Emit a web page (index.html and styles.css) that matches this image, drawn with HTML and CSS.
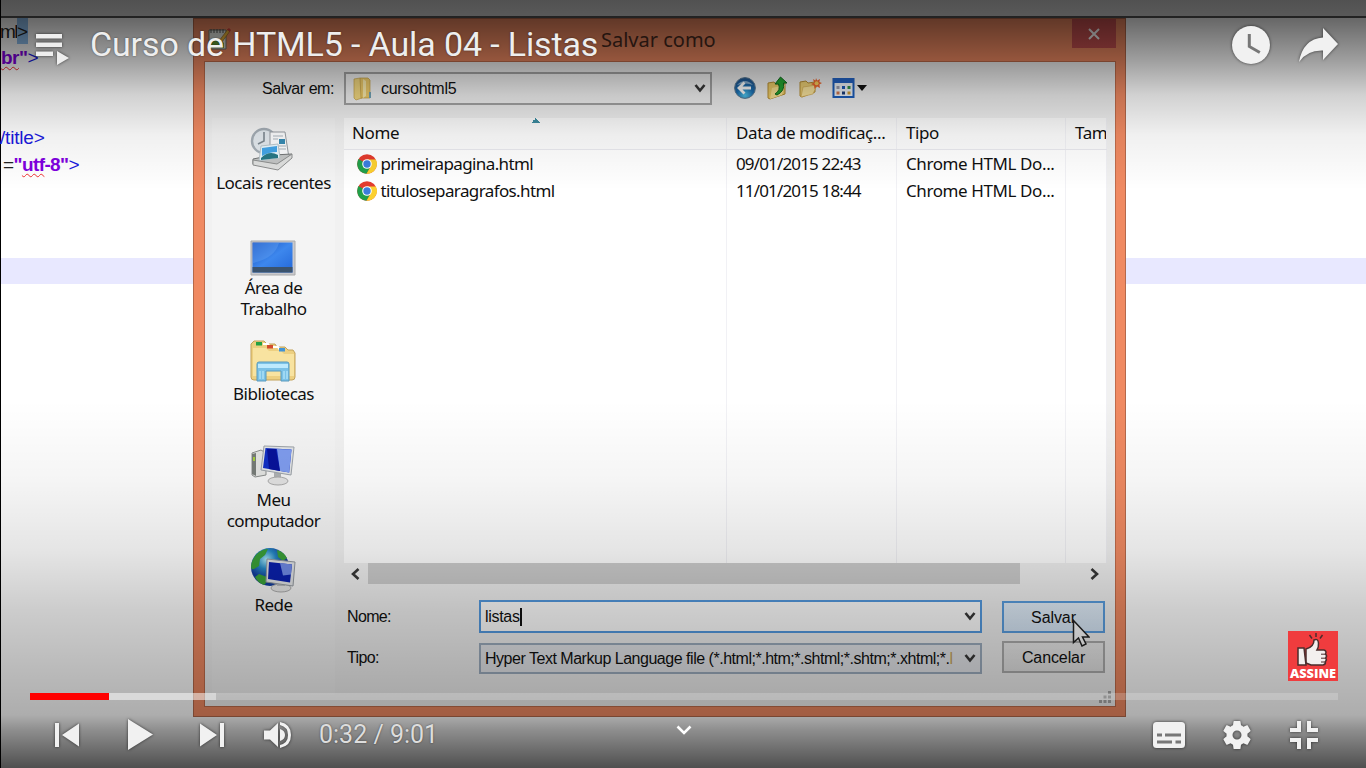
FILE: index.html
```html
<!DOCTYPE html>
<html lang="pt-BR">
<head>
<meta charset="utf-8">
<title>Curso de HTML5 - Aula 04 - Listas</title>
<link rel="stylesheet" href="styles.css">
</head>
<body>
<main class="player">
  <section class="editor">
    <div class="editor-bar"></div>
    <div class="line line-a"><span>ml</span><span class="brace">&gt;</span></div>
    <div class="line line-b"><b class="wavy">br</b><b>"</b><span class="tag">&gt;</span></div>
    <div class="line"></div>
    <div class="line"></div>
    <div class="line line-c"><span class="tag">/title&gt;</span></div>
    <div class="line line-d"><span>=</span><b>"</b><b class="wavy">utf</b><b>-8"</b><span class="tag">&gt;</span></div>
    <div class="line"></div>
    <div class="line"></div>
    <div class="line"></div>
    <div class="line current"></div>
  </section>

  <section class="dialog">
    <header class="titlebar">
      <svg class="app-icon" viewBox="0 0 24 24" width="24" height="24"><path d="M2 3h17v19H2z" fill="#e6e9e4" stroke="#6d756c"/><path d="M4 2v4M7 2v4M10 2v4M13 2v4M16 2v4" stroke="#555"/><path d="M4 15q8-5 13 1v5H4z" fill="#6aa83a"/><path d="M12 14L21 2l2 2-8 11z" fill="#f0b93a" stroke="#8d5c23" stroke-width=".6"/><path d="M20 2.500L22 1l2 2-1.500 2z" fill="#d5403a"/></svg>
      <h2 class="dialog-title">Salvar como</h2>
      <div class="close"><svg viewBox="0 0 12 12" width="12" height="12"><path d="M1 1l10 10M11 1L1 11" stroke="#fff" stroke-width="2"/></svg></div>
    </header>
    <div class="client">
      <div class="toolbar">
        <label class="look-label">Salvar em:</label>
        <div class="combo look">
          <svg viewBox="0 0 20 24" width="20" height="24"><path d="M1 2l6-1 2 2v18l-6 2-2-2z" fill="#f7dc82" stroke="#c9a64b" stroke-width=".7"/><path d="M7 1h8l2 2v18H8z" fill="#f2cf6c" stroke="#c6a144" stroke-width=".7"/><path d="M10 2v19l3-2V4z" fill="#fff0b0"/><path d="M16 15h2v6h-2z" fill="#72a4b8"/></svg>
          <span>cursohtml5</span>
          <svg class="chev" viewBox="0 0 12 9" width="12" height="9"><path d="M1.500 1L6 6.500 10.500 1" fill="none" stroke="#383838" stroke-width="2.600"/></svg>
        </div>
        <div class="tools">
          <svg viewBox="0 0 22 22" width="22" height="22"><defs><radialGradient id="bk" cx=".5" cy=".85" r=".8"><stop offset="0" stop-color="#51c8ef"/><stop offset=".5" stop-color="#1c71b5"/><stop offset="1" stop-color="#20558f"/></radialGradient></defs><circle cx="11" cy="11" r="10.400" fill="url(#bk)" stroke="#5c7c96"/><path d="M3 8q8-8 16 0-7-3-16 0" fill="#b8d3e7" opacity=".7"/><path d="M10.500 5.500L5 11l5.500 5.500M6 11h11" fill="none" stroke="#fff" stroke-width="2.800"/></svg>
          <svg viewBox="0 0 22 24" width="22" height="24"><path d="M2 7l6-1 2 2 9-1v11L4 23l-2-1z" fill="#f0cf69" stroke="#b99035"/><path d="M6 12l13-3-3 10-12 4z" fill="#ffe794"/><path d="M9 18q6-4 3.500-10H9l5.500-7L21 7h-3.500Q19 15 11 19z" fill="#25a830" stroke="#106b1c"/></svg>
          <svg viewBox="0 0 24 22" width="24" height="22"><path d="M2 5l6-1 2 2 7-1v10L4 20l-2-1z" fill="#f2d477" stroke="#b99035"/><path d="M5 10l14-2-4 9-12 3z" fill="#ffe9a0" stroke="#d3a94e" stroke-width=".6"/><path d="M18 1l1.200 2.500L22 2l-.6 3 2.600 1-2.600 1.500L22 11l-3-1.600L16.500 12 16 8.500 13 7l3-1.500L15 2l2.500 1.500z" fill="#f26a31"/><circle cx="18.600" cy="6.300" r="2" fill="#ffd05c"/></svg>
          <svg viewBox="0 0 36 22" width="36" height="22"><rect x="1.500" y="2" width="20" height="18" fill="#f1f6fb" stroke="#1c5fbe" stroke-width="2"/><path d="M1 1h21v5H1z" fill="#2464c6"/><g><path d="M4.500 9h3v3h-3z" fill="#9d9fb0"/><path d="M10 9h3v3h-3z" fill="#1d5ab8"/><path d="M15.500 9h3v3h-3z" fill="#329348"/><path d="M4.500 14.500h3v3h-3z" fill="#d4794e"/><path d="M10 14.500h3v3h-3z" fill="#1c3f7c"/><path d="M15.500 14.500h3v3h-3z" fill="#d29e34"/></g><path d="M25 8h10l-5 6z" fill="#111"/></svg>
        </div>
      </div>

      <div class="body">
        <nav class="places">
          <div class="place p1">
            <svg viewBox="0 0 46 46" width="46" height="46"><circle cx="14" cy="15" r="12" fill="#e2e8ed" stroke="#a4adb5" stroke-width="2.400"/><path d="M14 6v9l-6 3" fill="none" stroke="#7d8890" stroke-width="1.600"/><path d="M20 6h15l4 26-19-4z" fill="#fafbfc" stroke="#989da2"/><path d="M23 10h10M23 13h5M23 20h13M23 23h13" stroke="#aab3bc"/><path d="M29 13h6v5h-6z" fill="#388bb3"/><path d="M3 33l20-4 19-1-13 13L3 38z" fill="#c3c5c5" stroke="#717475"/><path d="M11 20l17-2 2 14-21 3z" fill="#e9f8ff" stroke="#bac6cb"/><path d="M12 22l15-2v6q-8 0-15 4z" fill="#43a5e8"/><path d="M11 32q8-8 17-3v3l-17 2z" fill="#267887"/><path d="M3 34l24 4 15-10v4L28 44 3 39z" fill="#dfe0df" stroke="#8c8e8e"/></svg>
            <span>Locais recentes</span>
          </div>
          <div class="place p2">
            <svg viewBox="0 0 46 36" width="46" height="36"><defs><linearGradient id="desk" x2="1" y2="1"><stop stop-color="#174fbe"/><stop offset=".5" stop-color="#3d87ed"/><stop offset="1" stop-color="#2367d8"/></linearGradient></defs><path d="M1 1h44v34H1z" fill="#c9c9cd" stroke="#aaa"/><path d="M2.500 2.500h40v30h-40z" fill="url(#desk)"/><path d="M3 3h26Q25 18 3 23z" fill="#64a2f3" opacity=".4"/><path d="M2.500 27h40v5.500h-40z" fill="#3b536d"/></svg>
            <span>Área de<br>Trabalho</span>
          </div>
          <div class="place p3">
            <svg viewBox="0 0 46 42" width="46" height="42"><path d="M1 37V4l3-3h10l3 3h8l2 3h8l3 3h5l2 3v24q0 3-3 3H4q-3 0-3-3z" fill="#edd081" stroke="#c2a25b"/><path d="M3 8h13l3 3h12l3 3h10v22H3z" fill="#f8e3a0"/><path d="M13 4h5l2 3h8l2 3h5" fill="none" stroke="#fff" stroke-width="2"/><path d="M6 2h6v3.500H6z" fill="#23a143"/><path d="M17 5h6v3.500h-6z" fill="#d24b2d"/><path d="M29 8h6v3.500h-6z" fill="#4294d6"/><path d="M7 24q0-2 2-2h28q2 0 2 2v17h-8V31H16v10H7z" fill="#7bc2e7" stroke="#5999bd"/><path d="M8 24h30v4H8z" fill="#bdeafe"/><path d="M10 31v8M13 31v8M34 31v8M37 31v8" stroke="#c3efff" stroke-width="1"/></svg>
            <span>Bibliotecas</span>
          </div>
          <div class="place p4">
            <svg viewBox="0 0 46 42" width="46" height="42"><path d="M2 9l9-3 5 3v22l-11 2-3-2z" fill="#e3e4e2" stroke="#8a8d8c"/><path d="M2 10l4-1v23l-4-2z" fill="#777c78"/><path d="M3 13h2v4H3z" fill="#a4cf3c"/><path d="M24 28l7 1v6h-7z" fill="#aeb1b3"/><ellipse cx="28" cy="37" rx="10" ry="4" fill="#e2e2e2" stroke="#aaa"/><path d="M14 2l30 1-3 28-30-5z" fill="#e2e4e6" stroke="#9ca2a8"/><path d="M15.500 4l26 1.500-2.300 23L13 24z" fill="#1230c4"/><path d="M27 5l14.500.5-2.300 23L30 27z" fill="#7f9cee"/><path d="M17 5h9l4 22-11-2z" fill="#07129a"/></svg>
            <span>Meu<br>computador</span>
          </div>
          <div class="place p5">
            <svg viewBox="0 0 46 46" width="46" height="46"><defs><radialGradient id="gl" cx=".4" cy=".3"><stop stop-color="#a5e6f5"/><stop offset=".5" stop-color="#2688c5"/><stop offset="1" stop-color="#123b9a"/></radialGradient></defs><circle cx="20" cy="20" r="19" fill="url(#gl)"/><path d="M8 6q5-4 10-4l-3 6-5 4-1 7-5 3q-3 1-3-3 1-8 7-13zM27 3q7 2 10 8l-4 3-5-4zM9 27l8 3-1 6-2 2q-7-3-9-8z" fill="#3aa038"/><ellipse cx="31" cy="41" rx="10" ry="4" fill="#e3e3e3" stroke="#aaa"/><path d="M27 33h8v6h-8z" fill="#b7b9bc"/><path d="M17 12l28 3-2 24-27-4z" fill="#e0e2e4" stroke="#92989e"/><path d="M19 15l23 2.500-2 18L18 32z" fill="#0a20ac"/><path d="M30 16l12 1.500-1 10-8 1z" fill="#6f8ae5"/></svg>
            <span>Rede</span>
          </div>
        </nav>

        <div class="main">
          <div class="files">
            <div class="row head"><span class="sorted">Nome</span><span>Data de modificaç...</span><span>Tipo</span><span>Tam</span></div>
            <div class="row"><span class="file"><svg class="chrome" viewBox="0 0 20 20"><use href="#chrome"/></svg><span>primeirapagina.html</span></span><span class="date">09/01/2015 22:43</span><span>Chrome HTML Do...</span><span></span></div>
            <div class="row"><span class="file"><svg class="chrome" viewBox="0 0 20 20"><use href="#chrome"/></svg><span>tituloseparagrafos.html</span></span><span class="date">11/01/2015 18:44</span><span>Chrome HTML Do...</span><span></span></div>
            <div class="row fill"><span></span><span></span><span></span><span></span></div>
          </div>
          <div class="scroll">
            <svg viewBox="0 0 10 12" width="10" height="12"><path d="M8.500 1L3 6l5.500 5" fill="none" stroke="#383838" stroke-width="2.600"/></svg>
            <div class="thumb"></div>
            <svg viewBox="0 0 10 12" width="10" height="12"><path d="M1.500 1L7 6l-5.500 5" fill="none" stroke="#383838" stroke-width="2.600"/></svg>
          </div>
          <div class="form">
            <label>Nome:</label>
            <div class="combo name"><span class="typed">listas</span><svg class="chev" viewBox="0 0 12 9" width="12" height="9"><path d="M1.500 1L6 6.500 10.500 1" fill="none" stroke="#383838" stroke-width="2.600"/></svg></div>
            <div class="button primary">Salvar</div>
            <label>Tipo:</label>
            <div class="combo kind"><span class="types">Hyper Text Markup Language file (*.html;*.htm;*.shtml;*.shtm;*.xhtml;*.<span class="cut">l</span></span><svg class="chev" viewBox="0 0 12 9" width="12" height="9"><path d="M1.500 1L6 6.500 10.500 1" fill="none" stroke="#383838" stroke-width="2.600"/></svg></div>
            <div class="button">Cancelar</div>
          </div>
        </div>
      </div>
      <svg class="grip" viewBox="0 0 12 12" width="12" height="12"><path d="M9 0h3v3H9zM9 4.500h3v3H9zM4.500 4.500h3v3h-3zM0 9h3v3H0zM4.500 9h3v3h-3zM9 9h3v3H9z" fill="#a8a8a8"/></svg>
    </div>
    <svg class="pointer" viewBox="0 0 18 28" width="18" height="28"><path d="M1.500 1.500v22l5-4.500 3.500 8 4-2-3.500-7H17z" fill="#fff" stroke="#222" stroke-width="1.500"/></svg>
  </section>

  <div class="shade"></div>

  <section class="overlay">
    <header class="top">
      <svg class="queue sh" viewBox="0 0 34 32" width="34" height="32"><path d="M1 1h26v4.500H1zM1 9.500h26V14H1zM1 18.500h17V23H1zM22 18l12 7-12 7z" fill="#eee"/></svg>
      <h1>Curso de HTML5 - Aula 04 - Listas</h1>
      <svg class="later sh" viewBox="0 0 38 38" width="38" height="38"><circle cx="19" cy="19" r="19" fill="#f1f1f1"/><path d="M17.300 8v12.500l10.500 6" fill="none" stroke="#777" stroke-width="3"/></svg>
      <svg class="share sh" viewBox="0 0 39 34" width="39" height="34"><path d="M24 0l15 16-15 16V22.500Q8 22 0 34 4 11 24 9.500z" fill="#f1f1f1"/></svg>
    </header>

    <svg class="subscribe" viewBox="0 0 50 50" width="50" height="50"><rect width="50" height="50" fill="#f03c3e"/><path d="M28 2v4M21.500 4l2.500 3.500M34.500 4L32 7.500" stroke="#4b2d2d" stroke-width="1.500"/><path d="M18 18q8-2 8-9 4-2 4.500 3 .3 4-1.500 7h7q3 1 1.500 4 2 2 .2 4 1.500 2-.3 3.500.5 3-2.400 3.500H23l-5-2z" fill="#f3f0ef" stroke="#4b2d2d" stroke-width="1.500"/><path d="M10 17h6l2 17h-8z" fill="#f3f0ef" stroke="#4b2d2d" stroke-width="1.500"/><path d="M33 23.200h5M33 27.200h5M33 31h5" stroke="#4b2d2d"/><text class="assine" x="25" y="47" text-anchor="middle" textLength="46" lengthAdjust="spacingAndGlyphs">ASSINE</text></svg>

    <footer class="bottom">
      <div class="progress"><div class="played"></div><div class="loaded"></div></div>
      <div class="controls">
        <svg class="prev sh" viewBox="0 0 24 24" width="24" height="24"><path d="M0 0h4v24H0zM24 .5v23L7 12z" fill="#f1f1f1"/></svg>
        <svg class="play sh" viewBox="0 0 25 31" width="25" height="31"><path d="M0 0l25 15.500L0 31z" fill="#f1f1f1"/></svg>
        <svg class="next sh" viewBox="0 0 24 24" width="24" height="24"><path d="M20 0h4v24h-4zM0 .5v23L17 12z" fill="#f1f1f1"/></svg>
        <svg class="volume sh" viewBox="0 0 28 26" width="28" height="26"><path d="M0 8.500h6L14 1v24l-8-7.500H0zM16 7q5 1.500 5 6t-5 6zM16 0q11 2 11 13T16 26v-3q8-2 8-10T16 3z" fill="#f1f1f1"/></svg>
        <div class="time">0:32 / 9:01</div>
        <svg class="more" viewBox="0 0 16 10" width="16" height="10"><path d="M1.500 1.500L8 8l6.500-6.500" fill="none" stroke="#fff" stroke-width="2.600"/></svg>
        <svg class="captions sh" viewBox="0 0 32 26" width="32" height="26"><rect width="32" height="26" rx="3.500" fill="#f1f1f1"/><path d="M4 11.500h5v3H4zM12 11.500h16v3H12zM4 18.500h15v3H4zM22.500 18.500H28v3h-5.500z" fill="#777"/></svg>
        <svg class="gear sh" viewBox="2.200 2 19.600 20" width="28" height="28"><path fill="#f1f1f1" fill-rule="evenodd" d="M19.430 12.980c.04-.32.07-.64.07-.98s-.03-.66-.07-.98l2.110-1.650c.19-.15.24-.42.12-.64l-2-3.460c-.12-.22-.39-.3-.61-.22l-2.490 1c-.52-.4-1.080-.73-1.690-.98l-.38-2.650A.49.49 0 0 0 14 2h-4c-.25 0-.46.18-.49.42l-.38 2.650c-.61.25-1.170.59-1.690.98l-2.490-1c-.23-.09-.49 0-.61.22l-2 3.460c-.13.22-.07.49.12.64l2.110 1.650c-.04.32-.07.65-.07.98s.03.66.07.98l-2.110 1.650c-.19.15-.24.42-.12.64l2 3.460c.12.22.39.3.61.22l2.490-1c.52.4 1.080.73 1.690.98l.38 2.650c.03.24.24.42.49.42h4c.25 0 .46-.18.49-.42l.38-2.650c.61-.25 1.170-.59 1.690-.98l2.490 1c.23.09.49 0 .61-.22l2-3.460c.12-.22.07-.49-.12-.64zM12 15.200a3.200 3.200 0 1 1 0-6.400 3.200 3.200 0 0 1 0 6.400z"/></svg>
        <svg class="exit sh" viewBox="0 0 28 28" width="28" height="28"><path d="M7 0h4v11H0V7h7zM17 0h4v7h7v4H17zM0 17h11v11H7v-7H0zM17 17h11v4h-7v7h-4z" fill="#f1f1f1"/></svg>
      </div>
    </footer>
  </section>
</main>
<svg width="0" height="0" class="symbols"><symbol id="chrome" viewBox="0 0 20 20"><circle cx="10" cy="10" r="9.800" fill="#e33b2e"/><path d="M10 10L1.500 5.100A9.800 9.800 0 0 0 9.500 19.800L14 12z" fill="#20a04a"/><path d="M10 5.500h8.800A9.800 9.800 0 0 1 9.500 19.800L14 12z" fill="#fbd02f"/><circle cx="10" cy="10" r="4.800" fill="#fff"/><circle cx="10" cy="10" r="3.700" fill="#3b7ddd"/></symbol></svg>
</body>
</html>
```
FILE: styles.css
```css
* { box-sizing: border-box; }
body { margin: 0; overflow: hidden; background: #000; }
svg { display: block; flex: none; }
.symbols { position: absolute; }

.player {
  position: relative;
  width: 1366px;
  height: 768px;
  overflow: hidden;
  background: #fff;
  font-family: "Liberation Sans", Arial, sans-serif;
}

/* Code editor behind the dialog */
.editor {
  height: 768px;
  border-left: 1px solid #000;
  font-size: 19px;
  color: #222;
}
.editor-bar {
  height: 17.500px;
  background: #dcdcdc;
  border-bottom: 2px solid #555;
}
.line { height: 26.700px; line-height: 28px; display: flex; white-space: pre; }
.line b { color: #8000e0; }
.tag { color: #1a1ae0; }
.line-a { margin-left: -1px; letter-spacing: -1.500px; }
.line-b { letter-spacing: -.5px; }
.line-c { margin-left: -1px; letter-spacing: -.2px; }
.line-d { margin-left: 2px; letter-spacing: -.6px; }
.brace { background: #8fc0f0; line-height: 25px; padding: 1px 1px 0 0; }
.wavy { text-decoration: underline wavy #f03030 1px; text-underline-offset: 2px; }
.current { background: #e8e8ff; }

/* Save dialog */
.dialog {
  position: absolute;
  left: 193px;
  top: 18px;
  width: 933px;
  height: 699px;
  padding: 0 10px 10px 11px;
  background: #f08a62;
  border: 1px solid #b5694b;
  display: flex;
  flex-direction: column;
}
.titlebar { height: 43px; display: flex; flex: none; }
.app-icon { margin: 8px 0 0 2px; }
.dialog-title {
  margin: 5px 0 0 370px;
  font: 400 20px/32px "Noto Sans", sans-serif;
  color: #47291e;
  white-space: nowrap;
}
.close {
  width: 44px;
  height: 29px;
  margin: 0 -1px 0 auto;
  background: #c75050;
  display: grid;
  place-items: center;
}
.client {
  position: relative;
  flex: 1;
  background: #f1f1f1;
  outline: 1px solid #c06c4b;
  color: #101010;
}
.toolbar { height: 56px; display: flex; align-items: flex-start; padding-top: 10px; }
.look-label { width: 129px; margin-right: 10px; text-align: right; font-size: 16px; line-height: 34px; letter-spacing: -.45px; }
.combo { display: flex; align-items: center; border: 2px solid #a5a5a5; background: #fff; font-size: 16px; overflow: hidden; letter-spacing: -.3px; }
.combo .chev { margin-left: auto; }
.look { width: 368px; height: 33px; padding: 0 4px 0 7px; gap: 8px; background: #f4f4f4; }
.tools { display: flex; align-items: center; gap: 10px; margin: 4px 0 0 22px; }

.body { display: flex; }
.places {
  width: 123px;
  height: 577px;
  margin: 0 9px 0 7px;
  background: #f4f4f4;
  font: 17px/21.300px "Noto Sans", sans-serif;
  letter-spacing: -.5px;
  text-align: center;
}
.place { display: flex; flex-direction: column; align-items: center; }
.place svg { margin-left: -1px; }
.place span { white-space: nowrap; }
.p1 { height: 122px; padding-top: 8px; }
.p2 { height: 100px; }
.p3 { height: 104px; }
.p4 { height: 103px; }
.p2 span { margin-top: 1px; }
.p3 span { margin-top: 1px; }
.p4 span { margin-top: 3px; }
.p5 span { margin-top: 1px; }

.main { width: 763px; }
.files {
  height: 445px;
  background: #fff;
  display: flex;
  flex-direction: column;
  font: 17px/27px "Noto Sans", sans-serif;
  letter-spacing: -.4px;
}
.row { display: grid; grid-template-columns: 383px 170px 169px 41px; height: 27px; white-space: nowrap; }
.row > span { padding-left: 9px; border-right: 1px solid #f1f1f5; overflow: hidden; }
.head { height: 32px; line-height: 30px; background: #fcfcfc; border-bottom: 1px solid #e9e9ee; }
.row > .sorted {
  padding-left: 8px;
  background: linear-gradient(135deg, transparent 50%, #3c8ca0 50%) 187px 0 / 5px 5px no-repeat,
              linear-gradient(225deg, transparent 50%, #3c8ca0 50%) 192px 0 / 5px 5px no-repeat;
}
.row > .file { display: flex; align-items: center; gap: 4px; padding-left: 12.500px; letter-spacing: -.62px; }
.chrome { width: 20px; height: 20px; }
.row > .date { letter-spacing: -.85px; }
.fill { flex: 1; height: auto; }

.scroll { height: 21px; display: flex; align-items: center; padding: 0 7px 0 6px; }
.thumb { width: 652px; height: 21px; margin: 0 auto 0 8px; background: #cdcdcd; }
.form {
  display: grid;
  grid-template-columns: 132px 503px 103px;
  grid-template-rows: 33px 32px;
  row-gap: 8px;
  margin: 16px 0 0 3px;
  font-size: 16px;
}
.form label { line-height: 34px; letter-spacing: -.65px; }
.combo.name { border-color: #549ae0; padding: 0 4px; }
.combo.kind { height: 31px; margin-top: 2px; padding: 0 4px; border-color: #9dadbf; background: #e6e8ec; }
.types { white-space: nowrap; letter-spacing: -.48px; }
.cut { color: #c9a75e; }
.typed { border-right: 2px solid #111; }
.button { margin-left: 20px; width: 103px; border: 2px solid #adadad; background: linear-gradient(#ececec, #e4e4e4); text-align: center; line-height: 29px; letter-spacing: -.1px; }
.primary { margin-top: 1px; border-color: #5a9ee0; background: linear-gradient(#e4f0fb, #d8e8f8); }
.grip { position: absolute; right: 4px; bottom: 3px; }
.pointer { position: absolute; left: 878px; top: 600px; }

/* Darkening at both ends of the picture */
.shade {
  position: absolute;
  inset: 0;
  background: linear-gradient(
    rgba(0,0,0,.63) 0, rgba(0,0,0,.59) 20px, rgba(0,0,0,.38) 60px,
    rgba(0,0,0,.18) 95px, rgba(0,0,0,.06) 135px, transparent 190px,
    transparent 400px, rgba(0,0,0,.04) 480px, rgba(0,0,0,.10) 550px,
    rgba(0,0,0,.20) 610px, rgba(0,0,0,.27) 670px, rgba(0,0,0,.32) 715px,
    rgba(0,0,0,.45) 731px, rgba(0,0,0,.69) 768px);
}

/* Player controls */
.overlay { position: absolute; inset: 0; display: flex; flex-direction: column; }
.sh { overflow: visible; filter: drop-shadow(0 0 1.500px rgba(0,0,0,.65)); }
.top { display: flex; align-items: flex-start; padding: 26px 28px 0 35px; height: 90px; }
.queue { margin-top: 7px; }
.top h1 {
  margin: -2px auto 0 21px;
  font: 400 34px/40px Roboto, sans-serif;
  letter-spacing: -.13px;
  color: #eee;
  white-space: nowrap;
  text-shadow: 0 0 2px rgba(0,0,0,.5);
}
.share { margin: 2px 0 0 29px; }
.subscribe { margin: auto 28px 12px auto; }
.assine { font: 800 11.500px "Open Sans", sans-serif; fill: #fff; }
.bottom { height: 75px; padding: 0 28px 0 30px; }
.progress { height: 7px; display: flex; background: rgba(255,255,255,.2); }
.played { width: 79px; background: #f00; }
.loaded { width: 107px; background: rgba(255,255,255,.4); }
.controls { height: 69px; display: flex; align-items: center; padding: 0 20px 0 25px; }
.play { margin-left: 49px; }
.next { margin-left: 47px; }
.volume { margin-left: 40px; }
.time { margin: 1px 0 0 27px; width: 357px; font: 25px/30px Roboto, sans-serif; color: #ddd; text-shadow: 0 0 2px rgba(0,0,0,.5); }
.more { margin-top: -10px; }
.captions { margin-left: auto; }
.gear { margin-left: 38px; }
.exit { margin-left: 39px; }
```
